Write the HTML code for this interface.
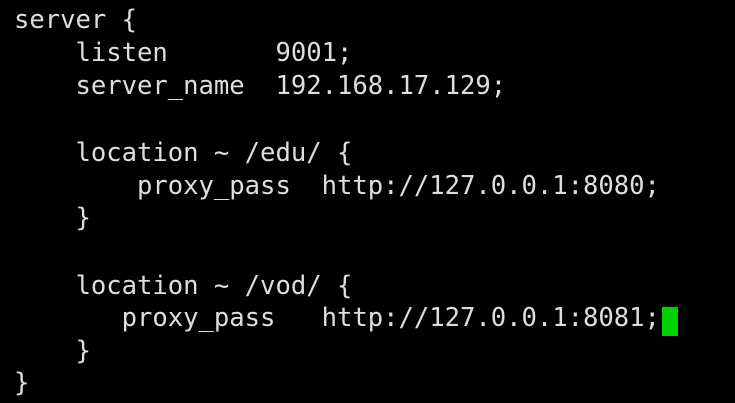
<!DOCTYPE html>
<html><head><style>
html,body{margin:0;padding:0;background:#000;width:735px;height:403px;overflow:hidden}
.l{position:absolute;left:14px;font-family:"DejaVu Sans Mono","Liberation Mono",monospace;font-size:25.6px;letter-spacing:-0.03px;line-height:33px;color:#dedede;white-space:pre}
.c{position:absolute;left:662px;top:307px;width:16px;height:29px;background:#00d200}
</style></head><body>
<div class="l" style="top:4px">server {</div>
<div class="l" style="top:37px">    listen       9001;</div>
<div class="l" style="top:70px">    server_name  192.168.17.129;</div>
<div class="l" style="top:137px">    location ~ /edu/ {</div>
<div class="l" style="top:170px">        proxy_pass  http://127.0.0.1:8080;</div>
<div class="l" style="top:202px">    }</div>
<div class="l" style="top:270px">    location ~ /vod/ {</div>
<div class="l" style="top:302px">       proxy_pass   http://127.0.0.1:8081;</div>
<div class="l" style="top:335px">    }</div>
<div class="l" style="top:367px">}</div>
<div class="c"></div>
</body></html>
